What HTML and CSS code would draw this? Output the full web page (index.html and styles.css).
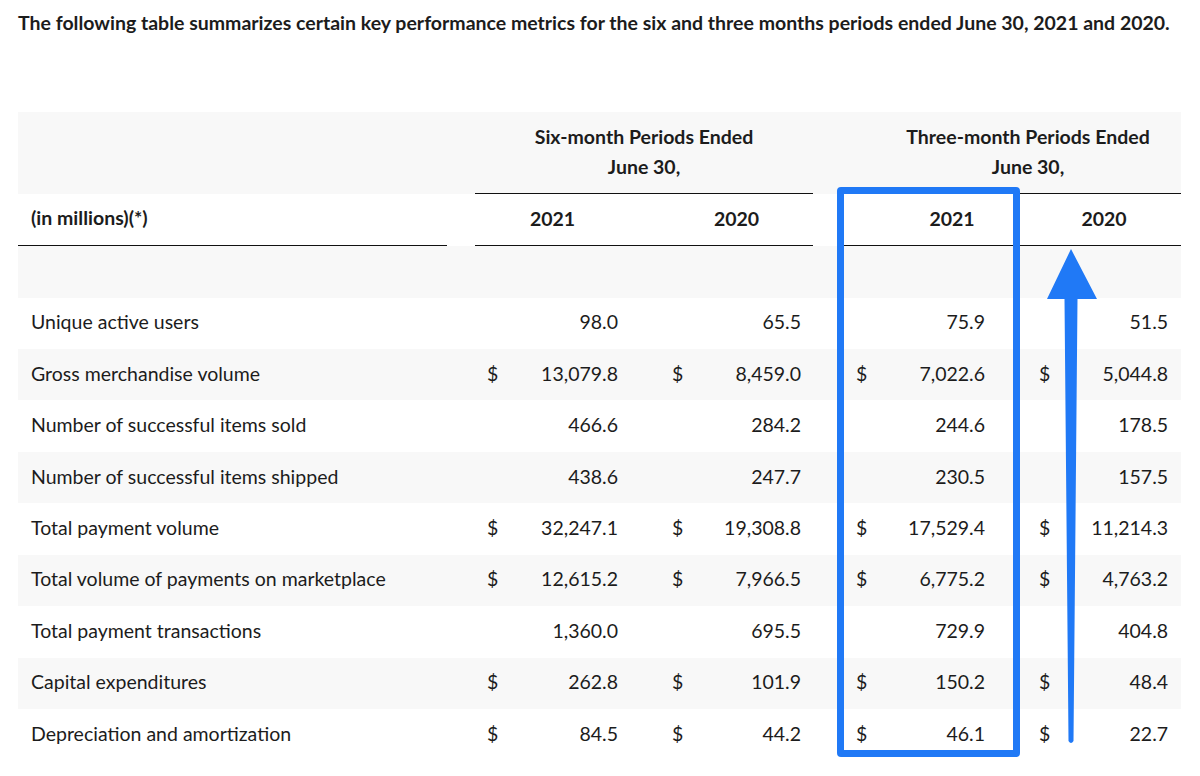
FILE: index.html
```html
<!DOCTYPE html>
<html>
<head>
<meta charset="utf-8">
<link rel="stylesheet" href="styles.css">
</head>
<body>
<div class="page">
  <h1 class="title">The following table summarizes certain key performance metrics for the six and three months periods ended June 30, 2021 and 2020.</h1>
  <div class="table-wrap">
    <table class="metrics">
      <colgroup>
        <col class="c-label"><col class="c-g1">
        <col class="c-s21d"><col class="c-s21v"><col class="c-sg">
        <col class="c-s20d"><col class="c-s20v"><col class="c-g2">
        <col class="c-t21d"><col class="c-t21v"><col class="c-tg">
        <col class="c-t20d"><col class="c-t20v">
      </colgroup>
      <thead>
        <tr class="grp-row">
          <th></th><th></th>
          <th colspan="5" class="grp">Six-month Periods Ended<br>June 30,</th>
          <th></th>
          <th colspan="5" class="grp grp-three">Three-month Periods Ended<br>June 30,</th>
        </tr>
        <tr class="year-row">
          <th class="unit">(in millions)(*)</th><th class="nl"></th>
          <th colspan="2" class="yr">2021</th><th class="yr"></th>
          <th colspan="2" class="yr">2020</th><th class="nl"></th>
          <th colspan="2" class="yr yr-t21">2021</th><th class="yr"></th>
          <th colspan="2" class="yr">2020</th>
        </tr>
      </thead>
      <tbody>
        <tr class="gray empty"><td colspan="13"></td></tr>
        <tr><td class="lbl">Unique active users</td><td></td><td class="d s"></td><td class="v s">98.0</td><td></td><td class="d s"></td><td class="v s">65.5</td><td></td><td class="d t"></td><td class="v t1">75.9</td><td></td><td class="d s"></td><td class="v t2">51.5</td></tr>
        <tr class="gray"><td class="lbl">Gross merchandise volume</td><td></td><td class="d s">$</td><td class="v s">13,079.8</td><td></td><td class="d s">$</td><td class="v s">8,459.0</td><td></td><td class="d t">$</td><td class="v t1">7,022.6</td><td></td><td class="d s">$</td><td class="v t2">5,044.8</td></tr>
        <tr><td class="lbl">Number of successful items sold</td><td></td><td class="d s"></td><td class="v s">466.6</td><td></td><td class="d s"></td><td class="v s">284.2</td><td></td><td class="d t"></td><td class="v t1">244.6</td><td></td><td class="d s"></td><td class="v t2">178.5</td></tr>
        <tr class="gray"><td class="lbl">Number of successful items shipped</td><td></td><td class="d s"></td><td class="v s">438.6</td><td></td><td class="d s"></td><td class="v s">247.7</td><td></td><td class="d t"></td><td class="v t1">230.5</td><td></td><td class="d s"></td><td class="v t2">157.5</td></tr>
        <tr><td class="lbl">Total payment volume</td><td></td><td class="d s">$</td><td class="v s">32,247.1</td><td></td><td class="d s">$</td><td class="v s">19,308.8</td><td></td><td class="d t">$</td><td class="v t1">17,529.4</td><td></td><td class="d s">$</td><td class="v t2">11,214.3</td></tr>
        <tr class="gray"><td class="lbl">Total volume of payments on marketplace</td><td></td><td class="d s">$</td><td class="v s">12,615.2</td><td></td><td class="d s">$</td><td class="v s">7,966.5</td><td></td><td class="d t">$</td><td class="v t1">6,775.2</td><td></td><td class="d s">$</td><td class="v t2">4,763.2</td></tr>
        <tr><td class="lbl">Total payment transactions</td><td></td><td class="d s"></td><td class="v s">1,360.0</td><td></td><td class="d s"></td><td class="v s">695.5</td><td></td><td class="d t"></td><td class="v t1">729.9</td><td></td><td class="d s"></td><td class="v t2">404.8</td></tr>
        <tr class="gray"><td class="lbl">Capital expenditures</td><td></td><td class="d s">$</td><td class="v s">262.8</td><td></td><td class="d s">$</td><td class="v s">101.9</td><td></td><td class="d t">$</td><td class="v t1">150.2</td><td></td><td class="d s">$</td><td class="v t2">48.4</td></tr>
        <tr><td class="lbl">Depreciation and amortization</td><td></td><td class="d s">$</td><td class="v s">84.5</td><td></td><td class="d s">$</td><td class="v s">44.2</td><td></td><td class="d t">$</td><td class="v t1">46.1</td><td></td><td class="d s">$</td><td class="v t2">22.7</td></tr>
      </tbody>
    </table>
    <div class="highlight-box"></div>
    <svg class="arrow" width="60" height="500" viewBox="0 0 60 500" aria-hidden="true">
      <path d="M24 0 L0 50 L17.5 50 L21.5 492 Q24 496 26.5 492 L30.5 50 L50 50 Z" fill="#2079f6"/>
    </svg>
  </div>
</div>
</body>
</html>
```

FILE: styles.css
```css
html, body {
  margin: 0;
  padding: 0;
  background: #ffffff;
}
body {
  font-family: Lato, "Open Sans", "Liberation Sans", sans-serif;
  color: #1c1c1c;
  width: 1200px;
  height: 776px;
  overflow: hidden;
}
.page {
  padding: 10px 0 0 18px;
}
.title {
  margin: 0;
  font-size: 19.5px;
  font-weight: 700;
  line-height: 26px;
  white-space: nowrap;
}
.table-wrap {
  position: relative;
  margin-top: 76px;
  width: 1163px;
}
.metrics {
  border-collapse: collapse;
  table-layout: fixed;
  width: 1163px;
  font-size: 19.5px;
}
.c-label { width: 429px; }
.c-g1 { width: 28px; }
.c-s21d { width: 35px; }
.c-s21v { width: 120px; }
.c-sg { width: 30px; }
.c-s20d { width: 35px; }
.c-s20v { width: 118px; }
.c-g2 { width: 25px; }
.c-t21d { width: 37px; }
.c-t21v { width: 125px; }
.c-tg { width: 27px; }
.c-t20d { width: 35px; }
.c-t20v { width: 119px; }

.metrics th, .metrics td {
  padding: 0 0 3px 0;
  white-space: nowrap;
}
.metrics .grp-row th {
  background: #f8f8f8;
  height: 79px;
  border-bottom: 1px solid #111;
  padding: 0 0 2px 0;
}
.metrics .grp-row th:nth-child(1),
.metrics .grp-row th:nth-child(2),
.metrics .grp-row th:nth-child(4) {
  border-bottom: none;
}
.grp {
  font-weight: 700;
  font-size: 19.5px;
  line-height: 30px;
  text-align: center;
  vertical-align: middle;
}
.metrics .grp-row th.grp-three {
  padding-left: 37px;
}
.metrics .year-row th {
  height: 48px;
  border-bottom: 1px solid #111;
  font-weight: 700;
  font-size: 19.5px;
  vertical-align: middle;
  background: #fff;
}
.metrics .year-row th.nl {
  border-bottom: none;
}
.metrics .year-row th.unit {
  text-align: left;
  padding-left: 13px;
}
.yr {
  text-align: center;
}
.metrics .year-row th.yr-t21 {
  padding-left: 66px;
}
.metrics tbody tr {
  height: 51.45px;
}
.metrics tbody tr.empty {
  height: 52px;
}
.gray td {
  background: #f8f8f8;
}
.metrics td.lbl {
  padding-left: 13px;
  text-align: left;
}
.metrics td.d {
  text-align: left;
  padding-left: 12px;
}
.metrics td.d.t {
  padding-left: 18px;
}
.metrics td.v {
  text-align: right;
  padding-right: 12px;
}
.metrics td.v.t1 {
  padding-right: 15px;
}
.metrics td.v.t2 {
  padding-right: 13px;
}
.highlight-box {
  position: absolute;
  left: 819px;
  top: 75px;
  width: 169px;
  height: 556px;
  border: 7px solid #2079f6;
  border-radius: 4px;
}
.arrow {
  position: absolute;
  left: 1029px;
  top: 137px;
}
```
